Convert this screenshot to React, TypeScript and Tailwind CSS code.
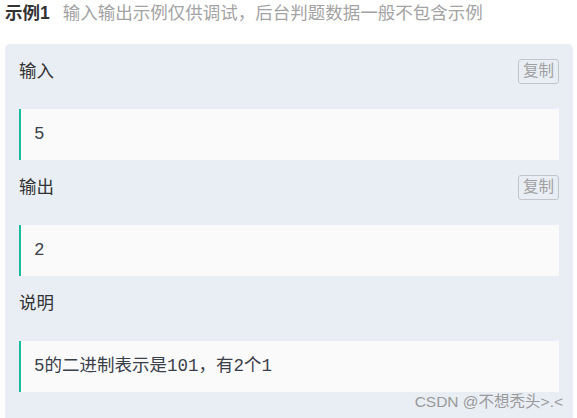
const cjk = "font-['Liberation_Sans','Noto_Sans_CJK_SC',sans-serif]";
const mono = "font-['Liberation_Mono','Noto_Sans_CJK_SC',monospace]";

interface Section {
  label: string;
  value: string;
  copy: boolean;
}

const sections: Section[] = [
  { label: "输入", value: "5", copy: true },
  { label: "输出", value: "2", copy: true },
  { label: "说明", value: "5的二进制表示是101，有2个1", copy: false },
];

function CopyButton() {
  return (
    <button
      className={`${cjk} w-[41px] h-[25px] flex items-center justify-center border border-[#c2c6cc] rounded-[3px] text-[15.5px] text-[#a0a0a0] leading-none`}
    >
      复制
    </button>
  );
}

export default function App() {
  return (
    <div className={`${cjk} relative h-[418px] w-[577px] overflow-hidden bg-white`}>
      <div className="h-[26px] flex items-center pl-[5px] gap-[13px]">
        <span className="text-[17.5px] font-bold text-[#333]">示例1</span>
        <span className="text-[17.5px] text-[#a3a3a3]">
          输入输出示例仅供调试，后台判题数据一般不包含示例
        </span>
      </div>

      <div className="mt-[18px] ml-[5px] w-[568px] rounded-[5px] bg-[#e9eef5] px-[14px] pt-[14px] pb-[40px]">
        {sections.map((s, i) => (
          <div key={s.label} className={i > 0 ? "mt-[14px]" : ""}>
            <div className="h-[26px] flex items-center justify-between">
              <span className="text-[17.5px] text-[#333]">{s.label}</span>
              {s.copy && <CopyButton />}
            </div>
            <div className="mt-[25px] h-[51px] flex items-center bg-[#fafafa] border-l-2 border-[#1abc9c] pl-[13px]">
              <span className={`${mono} text-[17.5px] text-[#3a3f4a]`}>{s.value}</span>
            </div>
          </div>
        ))}
      </div>

      <span className="absolute right-[14px] top-[390px] text-[15.5px] text-[#9a9a9a]">
        CSDN @不想秃头&gt;.&lt;
      </span>
    </div>
  );
}
